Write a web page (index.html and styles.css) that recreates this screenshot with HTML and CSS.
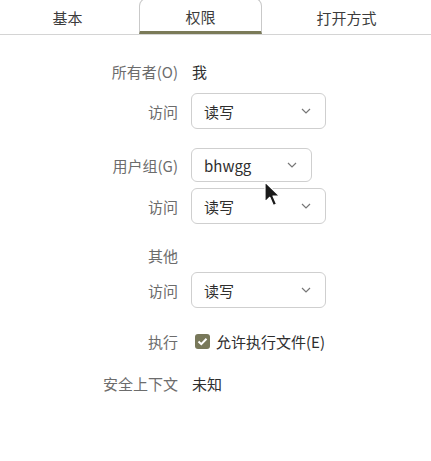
FILE: index.html
```html
<!DOCTYPE html>
<html lang="zh">
<head>
<meta charset="utf-8">
<link rel="stylesheet" href="styles.css">
</head>
<body>
<div class="tabs">
  <div class="tab t1">基本</div>
  <div class="tab t2 active">权限</div>
  <div class="tab t3">打开方式</div>
</div>
<div class="form">
  <div class="row r-owner"><span class="label">所有者(O)</span><span class="value">我</span></div>
  <div class="row r-acc1"><span class="label">访问</span>
    <div class="combo wide"><span>读写</span><svg class="chev" width="10" height="6" viewBox="0 0 10 6"><path d="M1 1 L5 5 L9 1" fill="none" stroke="#777" stroke-width="1.2"/></svg></div>
  </div>
  <div class="row r-group"><span class="label">用户组(G)</span>
    <div class="combo narrow"><span>bhwgg</span><svg class="chev" width="10" height="6" viewBox="0 0 10 6"><path d="M1 1 L5 5 L9 1" fill="none" stroke="#777" stroke-width="1.2"/></svg></div>
  </div>
  <div class="row r-acc2"><span class="label">访问</span>
    <div class="combo wide"><span>读写</span><svg class="chev" width="10" height="6" viewBox="0 0 10 6"><path d="M1 1 L5 5 L9 1" fill="none" stroke="#777" stroke-width="1.2"/></svg></div>
  </div>
  <div class="row r-other"><span class="label">其他</span></div>
  <div class="row r-acc3"><span class="label">访问</span>
    <div class="combo wide"><span>读写</span><svg class="chev" width="10" height="6" viewBox="0 0 10 6"><path d="M1 1 L5 5 L9 1" fill="none" stroke="#777" stroke-width="1.2"/></svg></div>
  </div>
  <div class="row r-exec"><span class="label">执行</span>
    <label class="check"><span class="box"><svg width="11" height="9" viewBox="0 0 11 9"><path d="M1.5 4.5 L4.3 7.2 L9.5 1.8" fill="none" stroke="#fff" stroke-width="2"/></svg></span>允许执行文件(E)</label>
  </div>
  <div class="row r-sec"><span class="label">安全上下文</span><span class="value">未知</span></div>
  <svg class="cursor" width="17" height="27" viewBox="0 0 17 27"><path d="M1 1 L1 21 L5.8 16.3 L9.3 24.5 L12.5 23 L9 15 L15.5 15 Z" fill="#1a1a1a" stroke="#fff" stroke-width="1.2" stroke-linejoin="round"/></svg>
</div>
</body>
</html>
```
FILE: styles.css
```css
html, body {
  margin: 0;
  padding: 0;
  background: #ffffff;
}
body {
  width: 431px;
  height: 461px;
  overflow: hidden;
  font-family: "Noto Sans CJK SC", "Noto Sans", sans-serif;
  font-size: 15px;
  color: #333333;
}
.tabs {
  display: flex;
  height: 34px;
  border-bottom: 1px solid #d4d4d4;
  box-sizing: content-box;
}
.tab {
  width: 123px;
  height: 34px;
  display: flex;
  align-items: center;
  justify-content: center;
  color: #3c3c3c;
  box-sizing: border-box;
}
.t1 { margin-left: 6px; }
.t2 { margin-left: 10px; }
.t3 { margin-left: 23px; }
.tab.active {
  border: 1px solid #c9c9c9;
  border-bottom: 3px solid #7a7a58;
  border-top-left-radius: 8px;
  border-top-right-radius: 8px;
  height: 36px;
  margin-top: -2px;
  padding-top: 2px;
  margin-bottom: -1px;
}
.form {
  position: relative;
  padding-top: 18px;
}
.row {
  display: flex;
  align-items: center;
}
.label {
  width: 178px;
  text-align: right;
  color: #6c6c6c;
  margin-right: 13px;
  flex: none;
}
.value {
  color: #2e2e2e;
  padding-left: 1px;
}
.r-owner { height: 36px; }
.r-acc1 { margin-top: 4px; height: 36px; }
.r-group { margin-top: 19px; height: 34px; }
.r-acc2 { margin-top: 6px; height: 36px; }
.r-other { margin-top: 16px; height: 30px; }
.r-acc3 { margin-top: 2px; height: 36px; }
.r-exec { margin-top: 18px; height: 30px; }
.r-sec { margin-top: 12px; height: 30px; }
.combo {
  height: 100%;
  box-sizing: border-box;
  border: 1px solid #cfcfcf;
  border-radius: 6px;
  display: flex;
  align-items: center;
  justify-content: space-between;
  padding: 0 14px 0 12px;
  color: #2e2e2e;
  background: #fff;
}
.combo.wide { width: 135px; }
.combo.narrow { width: 121px; }
.chev { flex: none; }
.check {
  display: flex;
  align-items: center;
  color: #2e2e2e;
  margin-left: 4px;
}
.box {
  width: 15px;
  height: 15px;
  border-radius: 3px;
  background: #78785a;
  display: flex;
  align-items: center;
  justify-content: center;
  margin-right: 6px;
}
.cursor {
  position: absolute;
  left: 264px;
  top: 146px;
}
```
